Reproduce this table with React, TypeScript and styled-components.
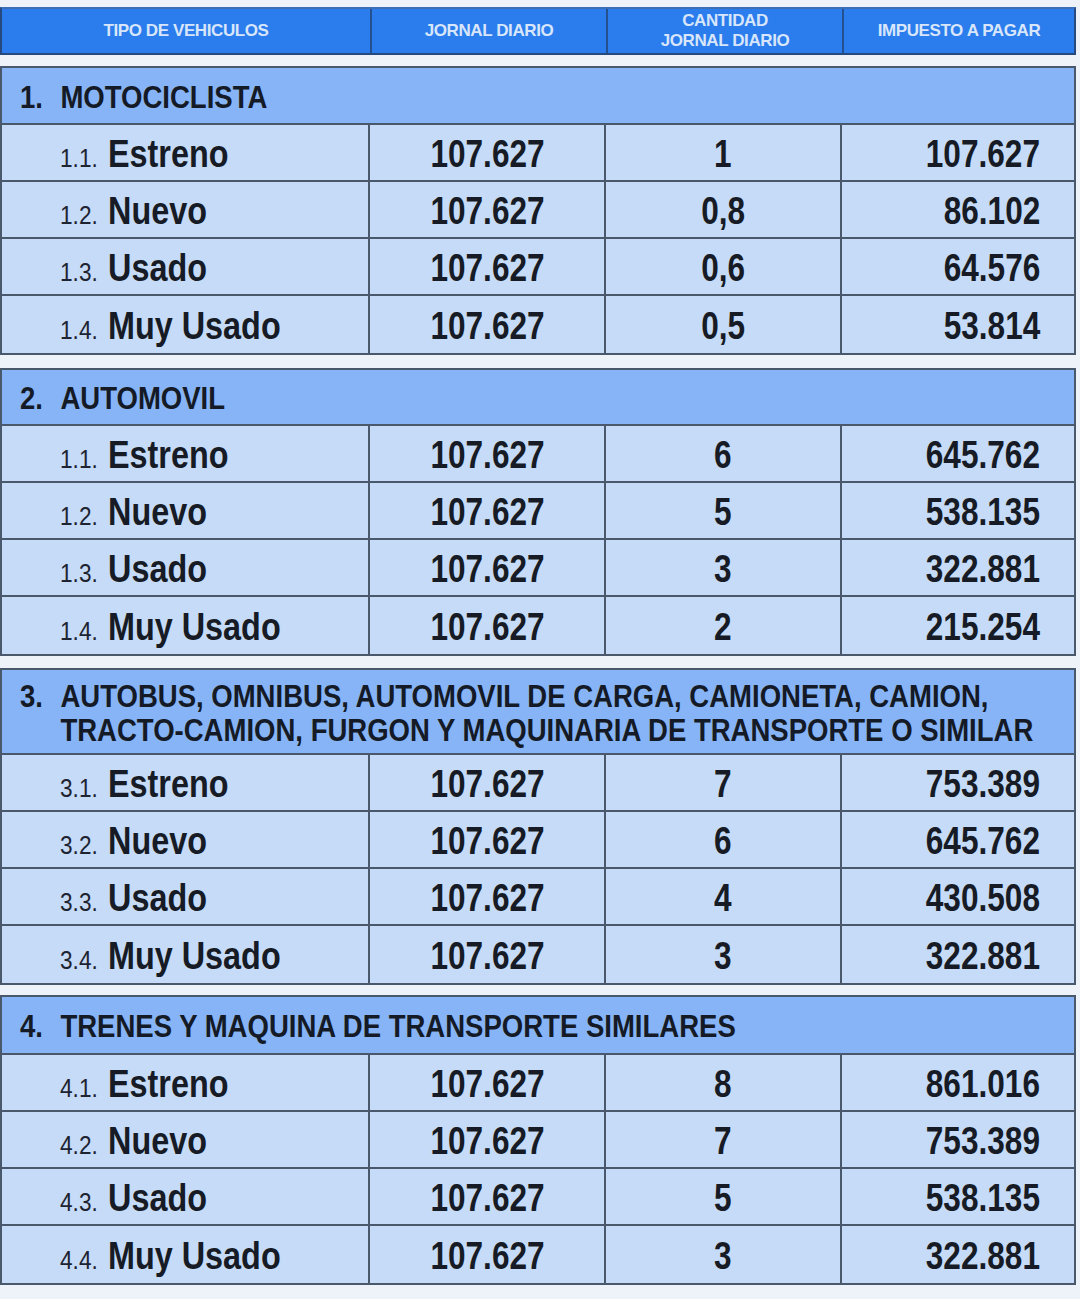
import React from "react";
import styled, { createGlobalStyle } from "styled-components";

const GlobalStyle = createGlobalStyle`
  html, body { margin: 0; padding: 0; background: #eef3fa; overflow: hidden; }
  * { box-sizing: border-box; }
`;

const FONT = `"Liberation Sans", Arial, sans-serif`;
const LINE = "#4a586c";

const Page = styled.div`
  width: 1076px;
  padding: 7px 0 14px 0;
  display: flex;
  flex-direction: column;
`;

const HeaderRow = styled.div`
  display: grid;
  grid-template-columns: 368px 236px 236px 1fr;
  height: 48px;
  background: #2b7cec;
  border: 2px solid #26497f;
  border-top-color: #3d6fb8;
`;

const HeaderCell = styled.div<{ $first?: boolean }>`
  display: flex;
  align-items: center;
  justify-content: center;
  text-align: center;
  font-family: ${FONT};
  font-weight: 700;
  font-size: 17px;
  line-height: 20px;
  letter-spacing: -0.4px;
  color: #d8e6fb;
  border-left: ${(p) => (p.$first ? "none" : "2px solid #24508f")};
`;

const Squeeze = styled.span<{ $s: number; $origin: "left" | "center" | "right" }>`
  display: inline-block;
  white-space: nowrap;
  transform: scaleX(${(p) => p.$s});
  transform-origin: ${(p) => p.$origin} center;
`;

const Section = styled.div<{ $gap: number }>`
  margin-top: ${(p) => p.$gap}px;
  border: 2px solid ${LINE};
  display: flex;
  flex-direction: column;
`;

const SectionTitle = styled.div<{ $h: number }>`
  height: ${(p) => p.$h}px;
  background: #87b4f6;
  display: flex;
  align-items: center;
  padding: 2px 0 0 18px;
  overflow: hidden;
  border-bottom: 2px solid ${LINE};
`;

const TitleInner = styled.div`
  display: grid;
  grid-template-columns: 47px auto;
  transform: scaleX(0.86);
  transform-origin: left center;
  white-space: nowrap;
  font-family: ${FONT};
  font-weight: 700;
  font-size: 32px;
  line-height: 34px;
  color: #141a26;
`;

const Row = styled.div<{ $last?: boolean }>`
  display: grid;
  grid-template-columns: 366px 236px 236px 1fr;
  height: 57px;
  background: #c6dbf8;
  border-bottom: ${(p) => (p.$last ? "none" : `2px solid ${LINE}`)};
`;

const Cell = styled.div<{ $align: "left" | "center" | "right"; $first?: boolean }>`
  display: flex;
  align-items: center;
  justify-content: ${(p) =>
    p.$align === "left" ? "flex-start" : p.$align === "center" ? "center" : "flex-end"};
  padding: ${(p) => (p.$align === "left" ? "2px 0 0 58px" : p.$align === "right" ? "2px 34px 0 0" : "2px 0 0 0")};
  border-left: ${(p) => (p.$first ? "none" : `2px solid ${LINE}`)};
  font-family: ${FONT};
  font-weight: 700;
  font-size: 39px;
  line-height: 44px;
  color: #161b25;
  white-space: nowrap;
`;

const Prefix = styled(Squeeze)`
  font-weight: 400;
  font-size: 26px;
  margin-right: 5px;
  margin-top: 8px;
  color: #1d2330;
`;

type Item = { label: string; qty: string; tax: string };

type Group = {
  num: string;
  title: React.ReactNode;
  h: number;
  gap: number;
  p: number;
  items: Item[];
};

const labels = ["Estreno", "Nuevo", "Usado", "Muy Usado"];

const mk = (qty: string[], tax: string[]): Item[] =>
  labels.map((l, i) => ({ label: l, qty: qty[i], tax: tax[i] }));

const groups: Group[] = [
  {
    num: "1.",
    title: "MOTOCICLISTA",
    h: 57,
    gap: 11,
    p: 1,
    items: mk(["1", "0,8", "0,6", "0,5"], ["107.627", "86.102", "64.576", "53.814"]),
  },
  {
    num: "2.",
    title: "AUTOMOVIL",
    h: 56,
    gap: 13,
    p: 1,
    items: mk(["6", "5", "3", "2"], ["645.762", "538.135", "322.881", "215.254"]),
  },
  {
    num: "3.",
    title: (
      <>
        AUTOBUS, OMNIBUS, AUTOMOVIL DE CARGA, CAMIONETA, CAMION,
        <br />
        TRACTO-CAMION, FURGON Y MAQUINARIA DE TRANSPORTE O SIMILAR
      </>
    ),
    h: 85,
    gap: 12,
    p: 3,
    items: mk(["7", "6", "4", "3"], ["753.389", "645.762", "430.508", "322.881"]),
  },
  {
    num: "4.",
    title: "TRENES Y MAQUINA DE TRANSPORTE SIMILARES",
    h: 58,
    gap: 10,
    p: 4,
    items: mk(["8", "7", "5", "3"], ["861.016", "753.389", "538.135", "322.881"]),
  },
];

export default function App() {
  return (
    <>
      <GlobalStyle />
      <Page>
        <HeaderRow>
          <HeaderCell $first>TIPO DE VEHICULOS</HeaderCell>
          <HeaderCell>JORNAL DIARIO</HeaderCell>
          <HeaderCell>
            CANTIDAD
            <br />
            JORNAL DIARIO
          </HeaderCell>
          <HeaderCell>IMPUESTO A PAGAR</HeaderCell>
        </HeaderRow>
        {groups.map((g) => (
          <Section key={g.num} $gap={g.gap}>
            <SectionTitle $h={g.h}>
              <TitleInner>
                <span>{g.num}</span>
                <span>{g.title}</span>
              </TitleInner>
            </SectionTitle>
            {g.items.map((it, i) => (
              <Row key={it.label} $last={i === g.items.length - 1}>
                <Cell $align="left" $first>
                  <Prefix $s={0.87} $origin="left">
                    {g.p}.{i + 1}.
                  </Prefix>
                  <Squeeze $s={0.83} $origin="left">
                    {it.label}
                  </Squeeze>
                </Cell>
                <Cell $align="center">
                  <Squeeze $s={0.81} $origin="center">
                    107.627
                  </Squeeze>
                </Cell>
                <Cell $align="center">
                  <Squeeze $s={0.81} $origin="center">
                    {it.qty}
                  </Squeeze>
                </Cell>
                <Cell $align="right">
                  <Squeeze $s={0.81} $origin="right">
                    {it.tax}
                  </Squeeze>
                </Cell>
              </Row>
            ))}
          </Section>
        ))}
      </Page>
    </>
  );
}
